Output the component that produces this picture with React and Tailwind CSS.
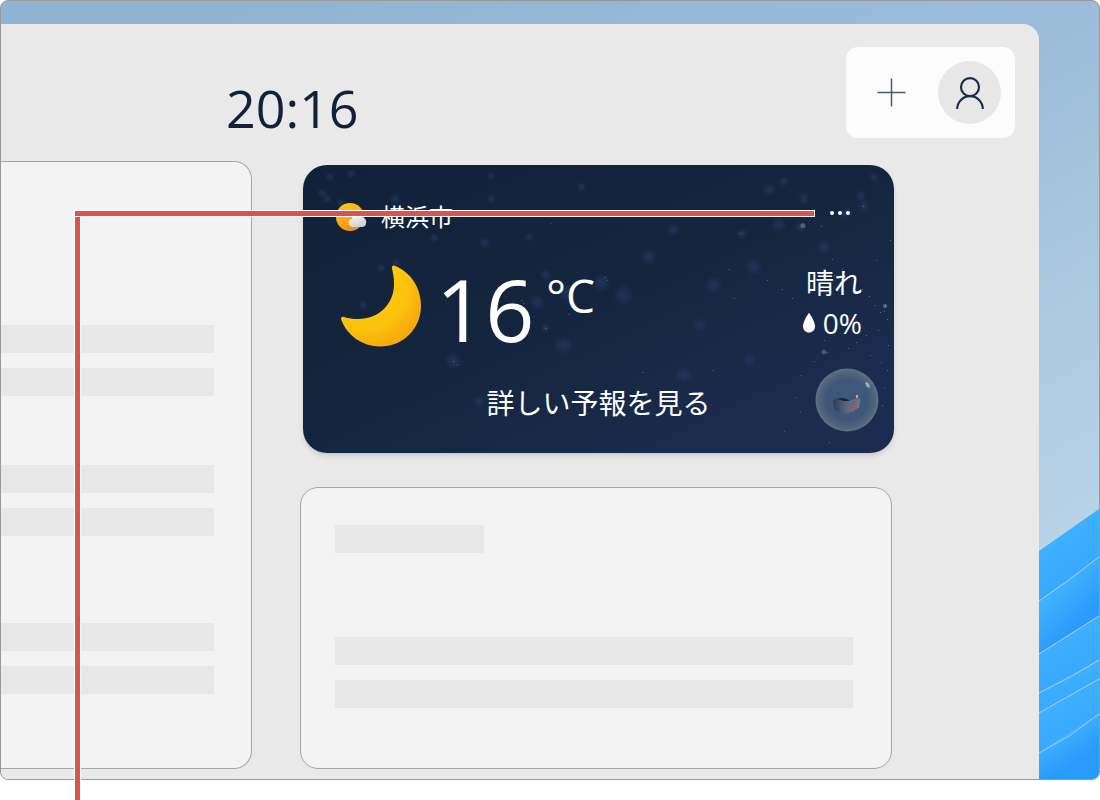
import React from "react";

const SPECKS = [
  [27, 12, 4], [48, 9, 4], [19, 28, 4], [24, 34, 4], [38, 38, 4], [92, 34, 5], [188, 11, 4], [188, 34, 4],
  [278, 22, 4], [181, 78, 5], [131, 73, 4], [93, 98, 4], [78, 103, 4], [60, 140, 4], [226, 72, 4],
  [150, 196, 8], [242, 110, 5], [262, 127, 8], [234, 137, 7], [176, 236, 5], [298, 118, 9], [320, 130, 10],
  [242, 163, 4], [260, 180, 9], [345, 92, 7], [370, 65, 6], [410, 120, 8], [438, 69, 5], [450, 102, 8],
  [475, 60, 7], [497, 62, 5], [520, 82, 6], [542, 48, 5], [557, 31, 5], [560, 41, 5], [570, 12, 4],
  [465, 25, 6], [480, 17, 4], [396, 160, 7], [445, 195, 6], [380, 210, 8], [500, 34, 5],
];

const STARS = [
  [150, 196], [154, 199], [247, 58], [301, 112], [303, 115], [218, 135], [220, 138], [242, 163], [265, 149],
  [436, 68], [517, 61], [528, 94], [538, 104], [559, 41], [586, 75], [572, 95], [530, 110], [543, 112],
  [550, 118], [558, 124], [565, 131], [571, 140], [576, 147], [582, 141], [583, 154], [574, 165], [562, 170],
  [552, 177], [544, 183], [566, 190], [577, 197], [583, 205], [580, 222], [578, 240], [540, 160], [520, 175],
  [510, 196], [497, 210], [492, 232], [496, 246], [504, 128], [488, 133], [478, 124], [463, 115], [430, 133],
  [580, 146], [584, 180], [517, 221], [523, 187], [425, 104], [409, 205], [339, 207], [480, 266], [525, 277],
];

function NightSky() {
  return (
    <svg className="absolute inset-0 h-full w-full" viewBox="0 0 590 288" preserveAspectRatio="xMidYMid slice" aria-hidden="true">
      <defs>
        <radialGradient id="speck">
          <stop offset="0.2" stopColor="#263c68" stopOpacity="0.55" />
          <stop offset="1" stopColor="#263c68" stopOpacity="0" />
        </radialGradient>
      </defs>
      {SPECKS.map(([x, y, r], i) => (
        <circle key={i} cx={x} cy={y} r={r + 1} fill="url(#speck)" />
      ))}
      {STARS.map(([x, y], i) => (
        <rect key={i} x={x} y={y} width="1" height="1" fill="#6b83a0" opacity="0.8" />
      ))}
      <circle cx="499" cy="61" r="2.500" fill="#566e8c" opacity="0.8" />
      <circle cx="520" cy="187" r="2.500" fill="#3d5878" />
      <circle cx="581" cy="141" r="2" fill="#566e8c" />
    </svg>
  );
}

function SunCloudIcon() {
  return (
    <svg className="h-7 w-8 shrink-0" viewBox="0 0 32 28" aria-hidden="true">
      <defs>
        <linearGradient id="sun" x1="0.2" y1="0" x2="0.6" y2="1">
          <stop offset="0" stopColor="#fec80c" />
          <stop offset="0.5" stopColor="#fdad12" />
          <stop offset="1" stopColor="#ef8b22" />
        </linearGradient>
        <linearGradient id="cloud" x1="0" y1="0" x2="0.5" y2="1">
          <stop offset="0" stopColor="#ffffff" />
          <stop offset="1" stopColor="#cfcfcf" />
        </linearGradient>
      </defs>
      <circle cx="15" cy="14" r="14" fill="url(#sun)" />
      <path d="M17.500 24a4.200 4.200 0 0 1-.4-8.300 5.500 5.500 0 0 1 10.300-1.200 4.800 4.800 0 0 1-.9 9.500z" fill="url(#cloud)" />
    </svg>
  );
}

function MoonIcon() {
  return (
    <svg className="h-[82px] w-[82px]" viewBox="0 0 82 82" aria-hidden="true">
      <defs>
        <radialGradient id="moon" cx="0.3" cy="0.25" r="0.78">
          <stop offset="0.4" stopColor="#fdc80f" />
          <stop offset="0.7" stopColor="#fcc10c" />
          <stop offset="1" stopColor="#f8a90b" />
        </radialGradient>
      </defs>
      <path
        d="M54.500 .7C69 6 81 21 81 40.500C81 64 63 81.500 40 81.500C22 81.500 7 70.500 1.200 54.600C.5 52.500 2 51.200 4 52C8.500 53.500 13 54 18 54C39 54 54 39 54 19C54 13 53 8 52 3.500C51.500 1.200 52.800 .2 54.500 .7Z"
        fill="url(#moon)"
      />
    </svg>
  );
}

function DropIcon() {
  return (
    <svg className="h-5 w-3" viewBox="0 0 12 20" fill="#fff" aria-hidden="true">
      <path d="M6 0C6.500 0 12 8.500 12 13.200C12 17 9.300 19.500 6 19.500S0 17 0 13.200C0 8.500 5.500 0 6 0Z" />
    </svg>
  );
}

function Orb() {
  return (
    <svg className="h-16 w-16" viewBox="0 0 64 64" aria-hidden="true">
      <defs>
        <radialGradient id="orb">
          <stop offset="0.65" stopColor="#3d5878" />
          <stop offset="0.88" stopColor="#51647c" />
          <stop offset="1" stopColor="#647082" />
        </radialGradient>
        <linearGradient id="fish" x1="0" x2="1">
          <stop offset="0" stopColor="#2b3c55" />
          <stop offset="0.5" stopColor="#59677f" />
          <stop offset="1" stopColor="#6d7280" />
        </linearGradient>
      </defs>
      <circle cx="32" cy="32" r="31.500" fill="url(#orb)" />
      <path d="M18 33Q21 27 34 33Q41 30 45 30Q47 39 39 43Q28 48 21 43Q18 40 18 33Z" fill="url(#fish)" />
      <path d="M22 31Q29 28 35 33L29 33Z" fill="#14253f" />
      <g fill="#dd5964">
        <rect x="34" y="41" width="1" height="1" />
        <rect x="37" y="40" width="1" height="1" />
        <rect x="39" y="38" width="1" height="1" />
        <rect x="42" y="36" width="1" height="1" />
        <rect x="37" y="43" width="1" height="1" />
        <rect x="43" y="39" width="1" height="1" />
      </g>
      <rect x="41" y="27" width="2" height="3" fill="#d5a93c" />
      <path d="M50 15l2-1 2 2 1 4-3-1z" fill="#9caebd" />
    </svg>
  );
}

function Petals() {
  return (
    <svg className="absolute bottom-0 right-0 h-[275px] w-15" viewBox="0 0 60 275" preserveAspectRatio="none" aria-hidden="true">
      <defs>
        <linearGradient id="petal" gradientUnits="objectBoundingBox" x1="0.2" y1="0.1" x2="0.7" y2="0.9">
          <stop offset="0.2" stopColor="#42b5fd" />
          <stop offset="0.8" stopColor="#2a9afd" />
        </linearGradient>
        <linearGradient id="petalSoft" x1="0" y1="0" x2="0.45" y2="1">
          <stop offset="0.2" stopColor="#41b3fd" />
          <stop offset="1" stopColor="#35a6fd" />
        </linearGradient>
      </defs>
      <path d="M0 47L60 5V53L0 97Z" fill="url(#petalSoft)" />
      <path d="M0 97L60 53V112L0 150Z" fill="url(#petal)" />
      <path d="M0 150L60 112V156L0 189Z" fill="url(#petalSoft)" />
      <path d="M0 189L60 156V175L0 209Z" fill="url(#petalSoft)" />
      <path d="M0 209L60 175V210L0 249Z" fill="url(#petalSoft)" />
      <path d="M0 249L60 210V275H0Z" fill="url(#petal)" />
      <path d="M0 97L30 76L60 53M0 150L60 112M0 189L35 171L60 156M0 209L60 175M0 249L30 232L60 210" fill="none" stroke="#a9cfec" strokeWidth="1" />
    </svg>
  );
}

function Bars() {
  return (
    <div className="flex flex-col gap-[15px]">
      <div className="h-7 bg-[#e7e7e7]" />
      <div className="h-7 bg-[#e7e7e7]" />
    </div>
  );
}

function WeatherCard() {
  return (
    <article className="relative ml-[3px] h-[288px] overflow-hidden rounded-3xl bg-[linear-gradient(155deg,#112139_5%,#14263f_50%,#1b2c4f_85%)] text-white shadow-md">
      <NightSky />
      <div className="relative flex h-full flex-col px-8 pt-8">
        <header className="flex h-10 items-center">
          <SunCloudIcon />
          <h2 className="ml-[14px] text-2xl leading-8">横浜市</h2>
          <button type="button" aria-label="その他のオプション" className="mb-2 ml-auto mr-3 flex gap-1">
            <span className="h-1 w-1 rounded-full bg-white" />
            <span className="h-1 w-1 rounded-full bg-white" />
            <span className="h-1 w-1 rounded-full bg-white" />
          </button>
        </header>
        <div className="mt-7 flex h-[92px] items-start pl-[5px]">
          <MoonIcon />
          <div className="ml-[14px] flex items-start">
            <span className="text-[86px] leading-[88px]">16</span>
            <span className="ml-3 text-[46px] leading-[60px]">°C</span>
          </div>
          <div className="ml-auto flex flex-col items-end">
            <span className="text-[28px] leading-9">晴れ</span>
            <span className="mt-1 flex items-center gap-2 text-[28px] leading-9">
              <DropIcon />
              0%
            </span>
          </div>
        </div>
        <a href="#forecast" className="mt-7 self-center text-[28px] leading-9">詳しい予報を見る</a>
      </div>
      <div className="absolute bottom-[21px] right-[15px]">
        <Orb />
      </div>
    </article>
  );
}

export default function App() {
  return (
    <div className="relative min-h-screen overflow-hidden bg-white pb-5 font-['Open_Sans','Noto_Sans_CJK_JP',sans-serif]">
      <div className="relative overflow-hidden rounded-lg border border-[#999999] bg-[linear-gradient(150deg,#8fb4d1_10%,#9bbdd9_45%,#b9d3e7_82%)] pr-15 pt-[23px]">
        <Petals />
        <main className="relative rounded-tr-2xl bg-[#e9e9e9] pb-[10px]">
          <header className="flex items-start justify-between pl-[225px] pr-6 pt-[23px]">
            <time className="mt-[31px] text-[52px] leading-[60px] text-[#112139]">20:16</time>
            <div className="flex h-[91px] items-center gap-[17px] rounded-xl bg-[#fcfcfc] pl-[15px] pr-[14px]">
              <button type="button" aria-label="ウィジェットを追加" className="grid h-15 w-15 place-items-center">
                <svg className="h-[29px] w-[29px]" viewBox="0 0 29 29" fill="none" stroke="#4c5a6e" strokeWidth="1.500" aria-hidden="true">
                  <path d="M14.500 .5v28M.5 14.500h28" />
                </svg>
              </button>
              <button type="button" aria-label="プロフィール" className="grid h-[63px] w-[63px] place-items-center rounded-full bg-[#e7e7e7]">
                <svg className="h-8 w-7" viewBox="0 0 28 32" fill="none" stroke="#1c2d49" strokeWidth="2.200" aria-hidden="true">
                  <circle cx="14" cy="10.200" r="9" />
                  <path d="M1.200 32A12.800 12.800 0 0 1 26.800 32" />
                </svg>
              </button>
            </div>
          </header>
          <div className="mt-[23px] flex items-start">
            <section aria-label="フィード" className="flex h-[608px] w-[251px] shrink-0 flex-col rounded-r-[18px] border border-l-0 border-[#a6a6a6] bg-[#f3f3f3] pr-[37px] pt-[163px]">
              <Bars />
              <div className="mt-[69px]"><Bars /></div>
              <div className="mt-[87px]"><Bars /></div>
            </section>
            <div className="ml-12 mr-[145px] flex min-w-0 flex-1 flex-col pt-1">
              <WeatherCard />
              <section aria-label="ウィジェット" className="mr-[2px] mt-[34px] h-[282px] rounded-[18px] border border-[#a6a6a6] bg-[#f3f3f3] pl-[34px] pr-[38px] pt-[37px]">
                <div className="mb-[84px] h-7 w-[149px] bg-[#e7e7e7]" />
                <Bars />
              </section>
            </div>
          </div>
        </main>
      </div>
      <div className="pointer-events-none absolute bottom-0 left-[74px] top-[211px] w-[7px] border-x border-white bg-[#d9534f]" />
      <div className="pointer-events-none absolute left-[75px] top-[210px] h-[7px] w-[740px] border border-l-0 border-white bg-[#d9534f]" />
    </div>
  );
}
